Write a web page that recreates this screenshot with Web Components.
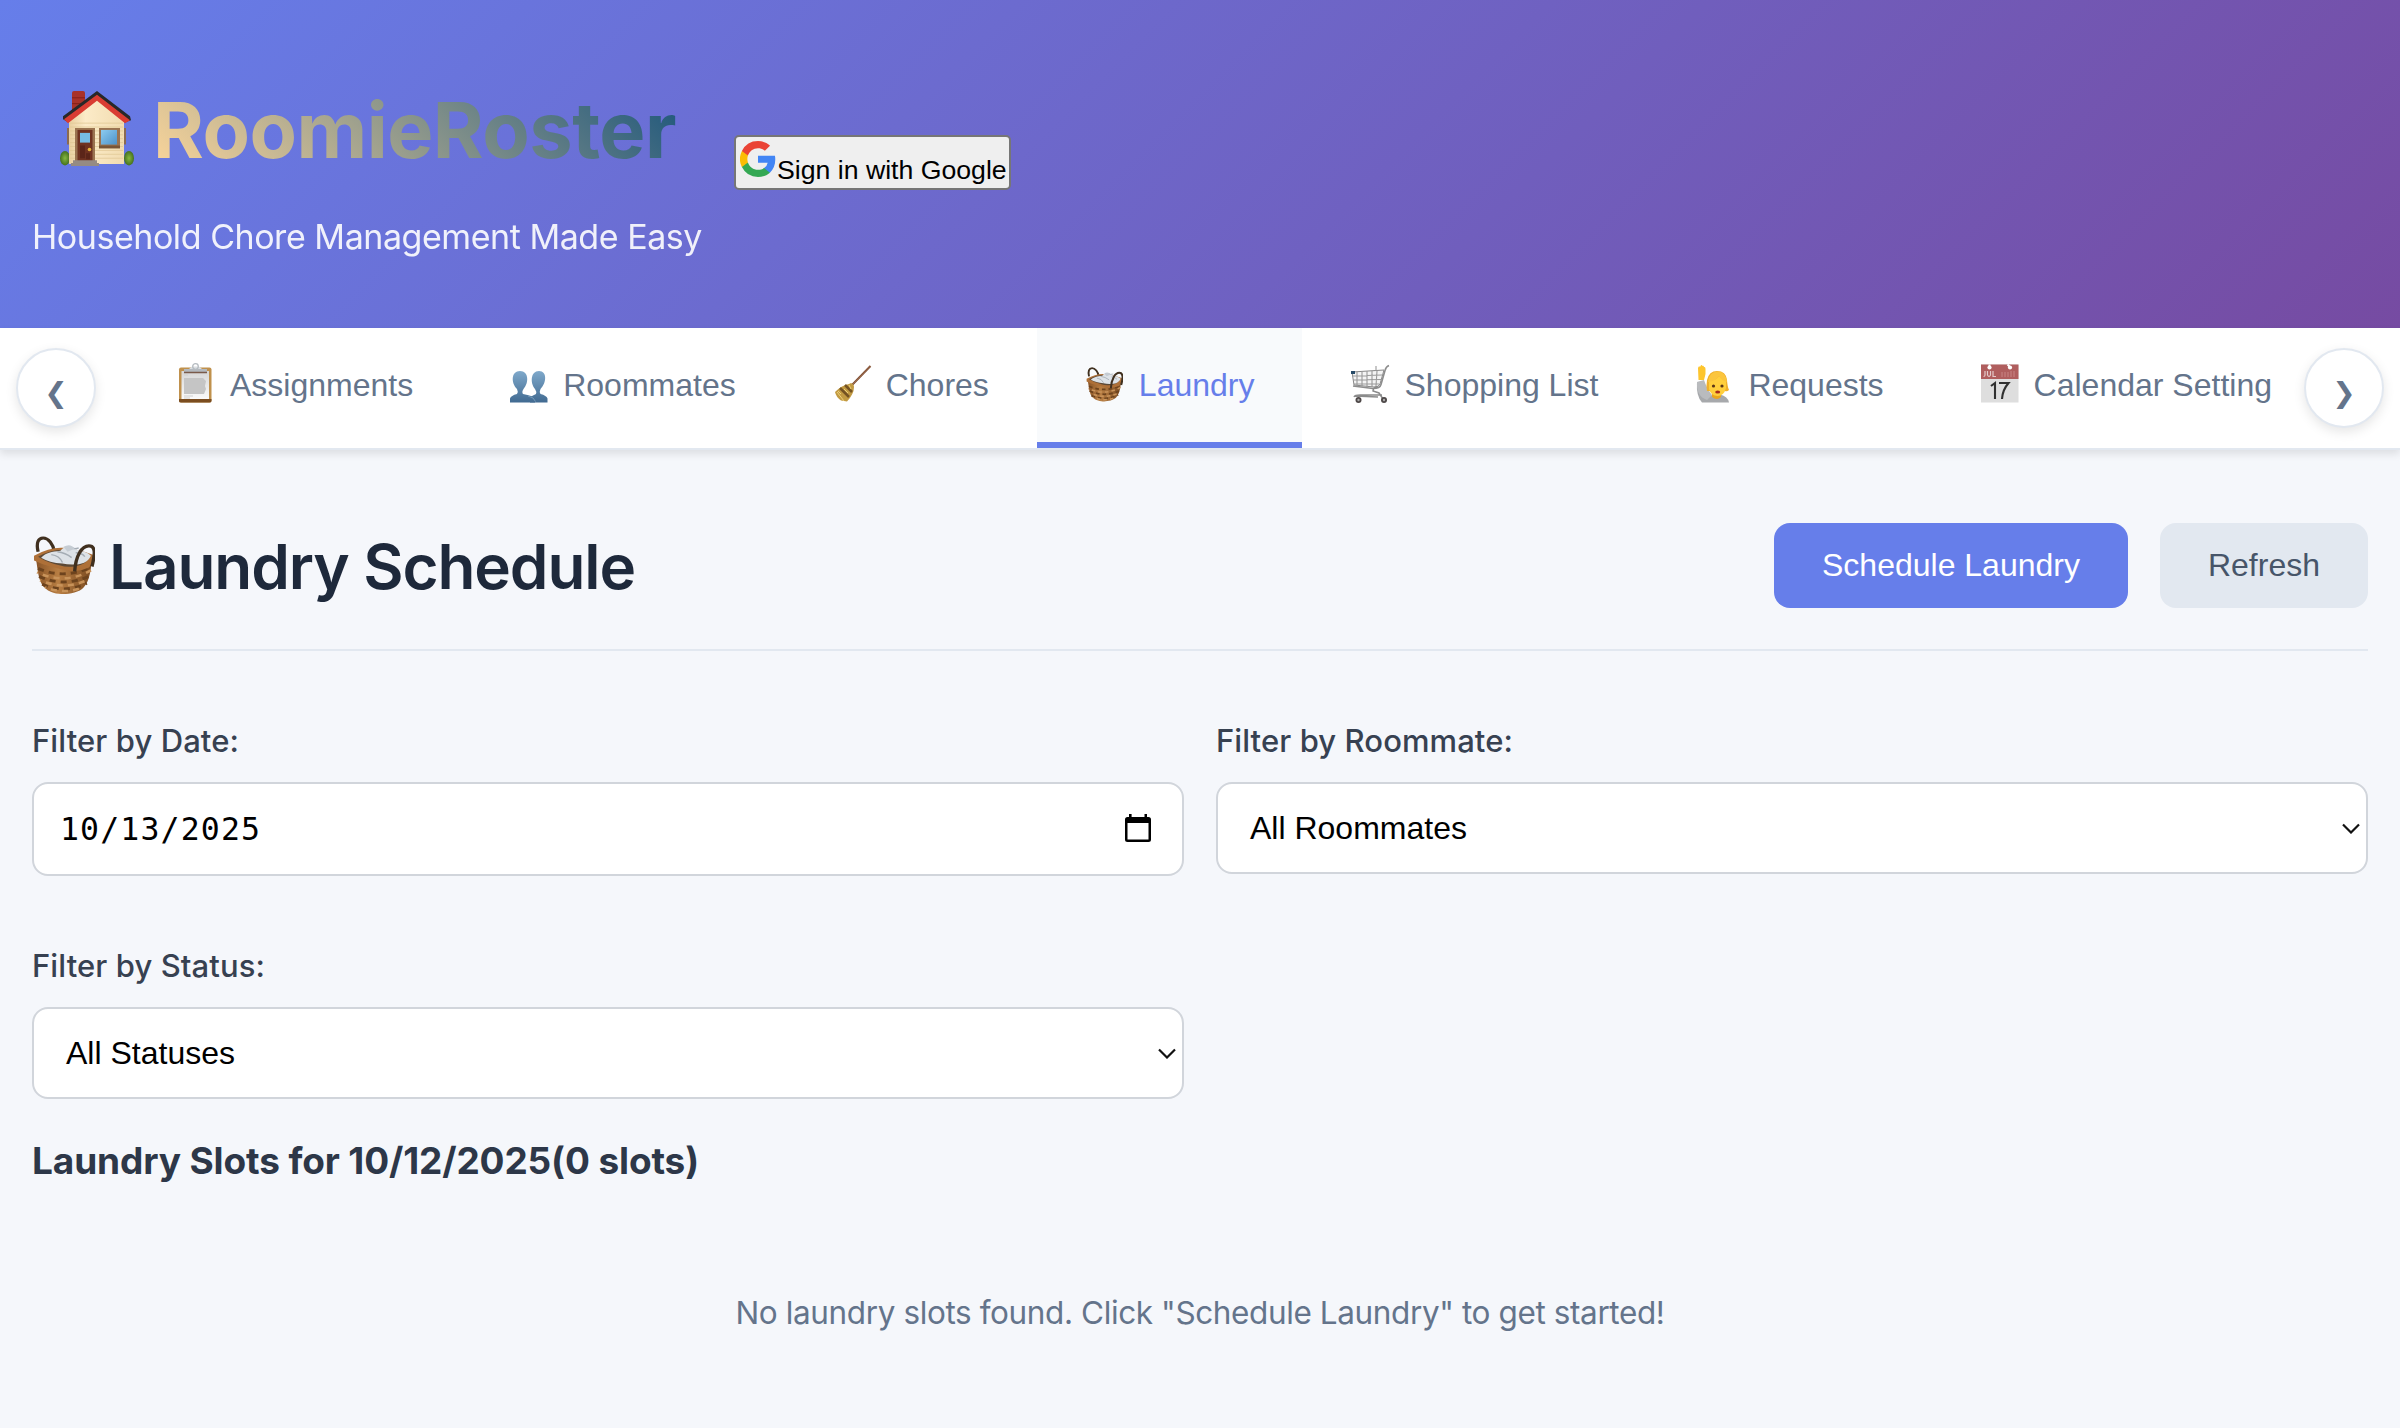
<!DOCTYPE html>
<html lang="en">
<head>
<meta charset="utf-8">
<title>RoomieRoster</title>
<style>
body{margin:0;background:#f5f7fb;font-family:Inter,"Liberation Sans",sans-serif;}
</style>
</head>
<body>
<roomie-app></roomie-app>
<script>
const define=(name,html,after)=>{
  const t=document.createElement('template');t.innerHTML=html;
  customElements.define(name,class extends HTMLElement{
    connectedCallback(){
      if(this.shadowRoot)return;
      this.attachShadow({mode:'open'}).append(t.content.cloneNode(true));
      if(after)after(this,this.shadowRoot);
    }
  });
};

/* Text line that tracks its letters to fill a given width */
define('fit-text',`<style>:host{display:block;white-space:pre}span{display:inline-block}</style><span><slot></slot></span>`,(el,r)=>{
  const s=r.querySelector('span'),w=+el.getAttribute('w'),n=el.textContent.length;
  s.style.letterSpacing=((w-s.getBoundingClientRect().width)/n)+'px';
  el.style.width=w+'px';
});

const basket=`<defs><linearGradient id="b" x1="0" x2="1"><stop offset="0" stop-color="#8a5528"/><stop offset=".4" stop-color="#b87e43"/><stop offset="1" stop-color="#7a4a20"/></linearGradient></defs>
<path d="M5 16C3 7 5 2 10 2s10 6 11 14" fill="none" stroke="#40301f" stroke-width="3.2"/>
<path d="M3 24c2 12 2 20 7 27 6 7 14 8 20 8s16-2 20-7c6-7 7-18 8-30z" fill="url(#b)"/>
<path d="M5 33q26 12 53-2M6 41q25 12 51-1M9 49q22 10 44-1" fill="none" stroke="#6d431d" stroke-width="3" stroke-dasharray="6 5"/>
<path d="M4 37q27 13 53-2M7 45q24 11 48-1M12 52q18 8 38 0" fill="none" stroke="#c8935a" stroke-width="2.600" stroke-dasharray="6 5" stroke-dashoffset="5"/>
<path d="M1 20Q17 11 30 12t29 7q1 7-4 13-10 5-20 3Q15 32 1 25z" fill="#ae7038"/>
<path d="M5 21q14-8 27-7t24 6q-3 9-15 11-9 1-14-1Q14 27 5 21z" fill="#5c4936"/>
<path d="M8 22c5-5 10-6 19-7 3-5 12-7 16-1 6 1 11 3 14 6-3 7-9 9-18 9q-6 0-10-1Q16 27 8 22z" fill="#dde2e7"/>
<path d="M18 19q8 1 11 8m-5-11q8 1 14 6m-3-11q5 3 10 1m-3 5q6 0 9 4" fill="none" stroke="#a5adb5" stroke-width="1.400"/>
<path d="M30 11q7-4 11 2l-7 3z" fill="#c5ccd3"/>
<path d="M41 36C42 20 48 10 55 10s6 9 3 21" fill="none" stroke="#40301f" stroke-width="3.300"/>`;
const art={
house:['0 0 74 78',`<defs><linearGradient id="w" x1="0" x2="1"><stop offset="0" stop-color="#e8cf9f"/><stop offset=".3" stop-color="#fcebc8"/><stop offset="1" stop-color="#f1dcb0"/></linearGradient><radialGradient id="g"><stop offset="0" stop-color="#86b83f"/><stop offset="1" stop-color="#44701d"/></radialGradient><linearGradient id="s" x1="0" y1="0" x2="1" y2="1"><stop offset="0" stop-color="#8ccbf0"/><stop offset="1" stop-color="#4d92c8"/></linearGradient></defs>
<path d="M12 3q0-2 2-2h9q2 0 2 2v16l-13 12z" fill="#a8322a"/><path d="M12 8h13M12 14h13M12 20h12" stroke="#842018"/>
<ellipse cx="5" cy="70" rx="5" ry="7.5" fill="url(#g)"/><ellipse cx="69" cy="70" rx="5" ry="7.5" fill="url(#g)"/>
<path d="M9 29 37 6l27 24v46H9z" fill="url(#w)"/>
<path d="M10 34h53M10 38h53M10 42h53M10 46h53M10 50h53M10 54h53M10 58h53M10 62h53M10 66h53M10 70h53" stroke="#e1c996" stroke-width=".8"/>
<path d="M7 39h2v17H7zM64 39h2v17h-2z" fill="#8b6a50"/>
<path d="m3 27 34-26 33 26 1 4-6 2L37 8 8 33l-5-3z" fill="#282829"/>
<path d="M4 30 37 5l33 26-5 3L37 11 8 34z" fill="#d93c32"/>
<path d="M15 39h20v36H15z" fill="#9a7350"/><path d="M17.5 41h15v33h-15z" fill="#6f3221"/><path d="M20 44h10v10H20z" fill="#76bce5"/>
<path d="M20 57h5v13h-5zM26 65h4v6h-4z" fill="#5b2519"/><circle cx="29.5" cy="61" r="1.8" fill="#e7b53c"/>
<path d="M39 39h21v20H39z" fill="#9a7350"/><path d="M41 41h16v15H41z" fill="url(#s)"/><path d="M39 57h21v3H39z" fill="#785536"/>
<path d="M13 72h24v3h2v3H11v-3h2z" fill="#958b83"/>`],
basket:['0 0 61 60',basket],
clipboard:['0 0 40 40',`<defs><linearGradient id="p" x2="0" y2="1"><stop offset="0" stop-color="#d6d6d6"/><stop offset="1" stop-color="#fafafa"/></linearGradient></defs><rect x="3" y="4.500" width="32.500" height="35" rx="2" fill="#c0914d"/><path d="M3 36h32.500v2q0 1.500-2 1.500H5q-2 0-2-1.500z" fill="#7b4d20"/><path d="M5.500 8h27.500v28H5.500z" fill="url(#p)"/><path d="M8 15h19l3 3-1 5 1 3-2 5H8z" fill="#c5c5c5"/><path d="M8 12h4M8 33h9M8 35h6" stroke="#d0d0d0"/><path d="M8 6h23v3.500H8z" fill="#b4b9be"/><path d="M8 9.500h23" stroke="#7a5a4a" stroke-width="1.500"/><path d="M13 6h13l-3-2.500h-7z" fill="#d9dee2"/><circle cx="19.500" cy="3.500" r="2.800" fill="none" stroke="#b5bbc0" stroke-width="1.300"/>`],
people:['0 0 40 40',`<defs><linearGradient id="q" x2="0" y2="1"><stop offset="0" stop-color="#7fa9cb"/><stop offset="1" stop-color="#416a91"/></linearGradient></defs><path d="M38.500 39.500v-4q-1-3-7-4.500-1.500-2 0-5c6-6 7-18-1.500-18S21 20 26 26q2 3 1 5l-6 3v5.500z" fill="url(#q)"/><path d="M1 39.500v-4q1-3 7-4.500 1.500-2 0-5C2 20 2 8 11 8s9 12 3.500 18q-2 3-.5 5 10 1.500 12 5v3.500z" fill="url(#q)"/><path d="m19 33 5 2 2.500 3.500" stroke="#7599b8" fill="none"/>`],
broom:['0 0 40 40',`<path d="M38.500 3 20 22" stroke="#7a4a30" stroke-width="2"/><path d="M38.500 3 20 22" stroke="#b98560" stroke-width=".6"/><path d="M19 20q3 1 3 4 0 7-7 14.500l-6-1Q4 34 3 29q7-7 14-8z" fill="#c29a42"/><path d="m8 25 9 9M13 22l7 7" stroke="#755323" stroke-width="2.500"/><path d="M5 29l7 9M6 28l3 3M12 26l4 4M17 22l2 4" stroke="#ecd079"/>`],
cart:['0 0 40 40',`<path d="M39 2.500q-3 1-4 5l-4 14q-1 4-8 4L3 23" fill="none" stroke="#8d8d8d" stroke-width="1.600"/><path d="m2 9 32-2-4 14q-1 3-6 3L4 22z" fill="#f4f4f4" stroke="#888"/><path d="M7 9v14M12 8.500v15M17 8v16M22 8v16M27 8l-1 15M2 13l30-1M3 17l28-.5M4 21h25M26 3v5" stroke="#9a9a9a" stroke-width="1.100"/><path d="M28 24q-5 0-5 4l6 2 4 6M4 34q1-2 6-2h22M5 33l23 1" fill="none" stroke="#8b8b8b" stroke-width="1.500"/><path d="M1 8h4v3H1z" fill="#274b68"/><circle cx="8.500" cy="37" r="3" fill="#4e4848"/><circle cx="34" cy="37" r="3" fill="#4e4848"/><circle cx="8.500" cy="37" r="1.200" fill="#aaa"/><circle cx="34" cy="37" r="1.200" fill="#aaa"/>`],
hand:['0 0 40 40',`<path d="M3 19q-1 14 5 20.500h27q-1-6-9-8l-8 1q-5-3-9-14z" fill="#a7a9ac"/><path d="m3 19 7-2q3 9 8 15l-5 5Q2 33 3 19z" fill="#b9bbbe"/><path d="M4.500 17 4 5q1-3 2-1l.5-1q1-2 2 0 1-1 1.500 1 1.500-.5 1.500 2v5l-1.500 6z" fill="#fdc52e"/><path d="M18 30h9v4q-4 4-9 0z" fill="#eaa51e"/><path d="M13 28q-1-5 0-11Q15 8 23 8q9 0 10 9 .5 7 2 10-2 2-4 1z" fill="#f1b02a"/><path d="M15 18q8-1 10-5 3 4 7 5v7q-2 8-8.500 8T15 26z" fill="#ffcf3d"/><path d="M14 19q8-1 11-6 3 5 8 6-1-10-9-10.500-9 0-10 10.500z" fill="#fbc53d"/><circle cx="19.500" cy="23" r="1.600" fill="#5b3517"/><circle cx="28" cy="23" r="1.600" fill="#5b3517"/><ellipse cx="23.700" cy="29" rx="2.500" ry="1.500" fill="#a52b1c"/>`],
calendar:['0 0 40 40',`<path d="M1 1.500h37.500v38H1z" fill="#dedede"/><path d="M1 1.500h37.500v14.500H1z" fill="#b05e5e"/><path d="M5 8v4q0 1.500-1.500 1.500M7.500 8v4q1.500 3 3 0V8M13 8v5.500h3" fill="none" stroke="#e4caca" stroke-width="1.200"/><path d="M22 9v5M25 9v5M28 9v5M31 8v6M34 8v6" stroke="#c98585"/><circle cx="9.500" cy="4.500" r="2.100" fill="#fff"/><circle cx="30" cy="4.500" r="2.100" fill="#fff"/><path d="M9.500 4V1.500M30 4l-2.500-2.500" stroke="#fff" stroke-width="2"/><path d="m11 23 4-3v16M19 20h9.500q-6 7-6.500 16" fill="none" stroke="#303030" stroke-width="2.100"/>`],
google:['0 0 18 18',`<path fill="#4285f4" d="M17.640 9.200c0-.640-.060-1.250-.160-1.840H9v3.480h4.840a4.140 4.140 0 0 1-1.800 2.720v2.260h2.920c1.700-1.570 2.680-3.880 2.680-6.620z"/><path fill="#34a853" d="M9 18c2.430 0 4.470-.8 5.960-2.180l-2.920-2.260c-.8.540-1.840.86-3.040.86-2.340 0-4.330-1.580-5.040-3.710H.96v2.330A9 9 0 0 0 9 18z"/><path fill="#fbbc05" d="M3.960 10.710a5.400 5.400 0 0 1 0-3.420V4.960H.96a9 9 0 0 0 0 8.080l3-2.330z"/><path fill="#ea4335" d="M9 3.580c1.320 0 2.500.45 3.440 1.350l2.580-2.580C13.460.89 11.430 0 9 0A9 9 0 0 0 .96 4.960l3 2.330C4.670 5.160 6.660 3.580 9 3.580z"/>`],
date:['0 0 26 28',`<path d="M4 0h2.600v3H19.500V0H22v3h1.500q2.500 0 2.500 2.500v20q0 2.500-2.500 2.500h-21Q0 28 0 25.500v-20Q0 3 2.500 3H4zM2.500 9v16.500h21V9z"/>`],
down:['0 0 18 11',`<path d="m1 1.500 8 8 8-8" fill="none" stroke="#111" stroke-width="2.200"/>`]
};
define('app-icon',`<style>:host{display:block;flex:none}svg{display:block;width:100%;height:100%}</style>`,(el,r)=>{
  const a=art[el.getAttribute('name')];
  r.innerHTML+=`<svg viewBox="${a[0]}" preserveAspectRatio="none">${a[1]}</svg>`;
});

define('google-button',`<style>
:host{display:block}
button{box-sizing:border-box;display:flex;align-items:flex-start;width:277px;height:55px;padding:3.500px 0 0 3.500px;border:2px solid #767676;border-radius:5px;background:#efefef;color:#000;font:26.670px/32px "Liberation Sans",sans-serif;white-space:pre}
app-icon{width:36px;height:36px}span{padding-top:13px;padding-left:1.500px}
</style><button><app-icon name="google"></app-icon><span><slot></slot></span></button>`);

define('app-header',`<style>
:host{display:flex;box-sizing:border-box;height:328px;padding:81.500px 0 0 32px;background:linear-gradient(135deg,#667eea 0%,#764ba2 100%)}
.brand{width:702px}
.title{display:flex;height:96px;padding-left:28px}
.title app-icon{width:74px;height:76px;margin-top:8.500px}
.title fit-text{margin-left:19px;font-size:77.500px;font-weight:700;line-height:96px;background:linear-gradient(45deg,#ffd89b,#19547b);-webkit-background-clip:text;background-clip:text;color:transparent}
.sub{margin-top:31px;font-size:34px;line-height:56px;color:#fff;opacity:.9}
google-button{margin-top:53.500px}
</style><div class="brand"><div class="title"><app-icon name="house"></app-icon><fit-text w="523">RoomieRoster</fit-text></div>
<fit-text class="sub" w="670">Household Chore Management Made Easy</fit-text></div>
<google-button>Sign in with Google</google-button>`);

define('nav-tab',`<style>
:host{display:flex;box-sizing:border-box;flex:none;height:120px;padding:0 48px;border-bottom:6px solid transparent;color:#64748b;font:32px/40px "Liberation Sans",sans-serif;white-space:pre}
:host([active]){color:#667eea;background:#f8fafc;border-bottom-color:#667eea}
.icon{width:40px;height:40px;margin:35px 14px 0 0}
.icon app-icon{width:40px;height:40px}
:host([icon=basket]) app-icon{width:37px;height:35px;margin:4px 0 0 1px}
span{padding-top:37px}
</style><div class="icon"></div><span><slot></slot></span>`,(el,r)=>{
  r.querySelector('.icon').innerHTML=`<app-icon name="${el.getAttribute('icon')}"></app-icon>`;
});
define('round-button',`<style>
:host{display:block;flex:none;box-sizing:border-box;width:80px;height:80px;border:2px solid #e2e8f0;border-radius:50%;background:#fff;box-shadow:0 4px 12px rgba(0,0,0,.1);color:#64748b;font:bold 28px/86px "DejaVu Sans",sans-serif;text-align:center}
</style><slot></slot>`);
define('app-nav',`<style>
:host{display:flex;align-items:flex-start;box-sizing:border-box;height:122px;padding:0 16px;background:#fff;border-bottom:2px solid #e2e8f0;box-shadow:0 4px 8px rgba(0,0,0,.1)}
.list{display:flex;width:2144px;margin:0 32px;overflow:hidden}
round-button{margin-top:20px}
</style><round-button>❮</round-button><div class="list">
<nav-tab icon="clipboard">Assignments</nav-tab><nav-tab icon="people">Roommates</nav-tab><nav-tab icon="broom">Chores</nav-tab><nav-tab icon="basket" active>Laundry</nav-tab><nav-tab icon="cart">Shopping List</nav-tab><nav-tab icon="hand">Requests</nav-tab><nav-tab icon="calendar">Calendar Setting</nav-tab></div><round-button>❯</round-button>`);

define('app-button',`<style>
:host{display:block;box-sizing:border-box;height:85px;padding:0 48px;border-radius:16px;background:#e2e8f0;color:#475569;font:32px/85px "Liberation Sans",sans-serif;white-space:pre}
:host([primary]){background:#667eea;color:#fff}
</style><slot></slot>`);
define('page-heading',`<style>
:host{display:flex;box-sizing:border-box;height:128px;border-bottom:2px solid #e2e8f0}
app-icon{width:62px;height:59px;margin:13px 14px 0 1px}
fit-text{font-size:62px;font-weight:600;line-height:87px;color:#1e293b}
.actions{display:flex;gap:32px;margin-left:auto}
</style><app-icon name="basket"></app-icon><fit-text w="526">Laundry Schedule</fit-text>
<div class="actions"><app-button primary>Schedule Laundry</app-button><app-button>Refresh</app-button></div>`);

define('filter-field',`<style>
:host{display:block}
fit-text{font-size:31px;font-weight:500;line-height:40px;color:#374151}
.box{display:flex;align-items:center;justify-content:space-between;box-sizing:border-box;height:92px;margin-top:21px;padding:0 6px 0 32px;border:2px solid #d1d5db;border-radius:16px;background:#fff;color:#000;font:32px/88px "Liberation Sans",sans-serif;white-space:pre}
.box app-icon{width:18px;height:11px}
:host([date]) .box{height:94px;padding:0 31px 0 26px;font:31.500px/90px "DejaVu Sans Mono",monospace;letter-spacing:1.150px}
:host([date]) .box app-icon{width:26px;height:28px;margin-bottom:2px}
</style><div class="label"></div><div class="box"><slot></slot></div>`,(el,r)=>{
  r.querySelector('.label').innerHTML=`<fit-text w="${el.getAttribute('w')}">${el.getAttribute('label')}</fit-text>`;
  r.querySelector('.box').insertAdjacentHTML('beforeend',`<app-icon name="${el.hasAttribute('date')?'date':'down'}"></app-icon>`);
});

define('laundry-page',`<style>
:host{display:block;padding:73px 32px 0}
.filters{display:grid;grid-template-columns:1fr 1fr;gap:70px 32px;margin-top:70px}
.slots{margin-top:37.500px;font-size:37px;font-weight:700;line-height:48px;color:#2d3748}
.empty{margin:104px auto 0;font-size:31.500px;line-height:48px;color:#64748b}
</style><page-heading></page-heading>
<div class="filters"><filter-field date label="Filter by Date:" w="207">10/13/2025</filter-field><filter-field label="Filter by Roommate:" w="297">All Roommates</filter-field><filter-field label="Filter by Status:" w="233">All Statuses</filter-field></div>
<fit-text class="slots" w="667">Laundry Slots for 10/12/2025(0 slots)</fit-text>
<fit-text class="empty" w="929">No laundry slots found. Click "Schedule Laundry" to get started!</fit-text>`);

define('roomie-app',`<style>:host{display:block;height:1428px;overflow:hidden}app-nav{position:relative}</style><app-header></app-header><app-nav></app-nav><laundry-page></laundry-page>`);
</script>
</body>
</html>
